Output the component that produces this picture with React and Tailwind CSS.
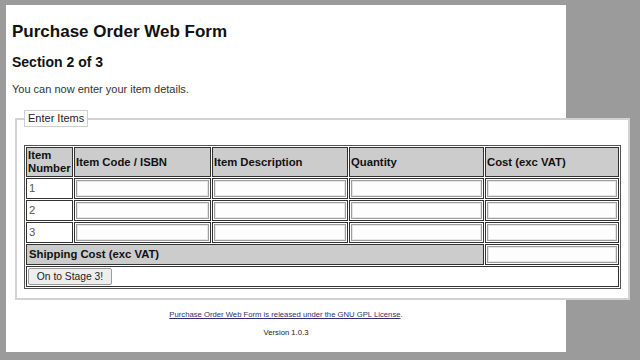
import React from "react";

const cellB = "border border-[#333333]";
const inputCls =
  "block w-full h-[17px] border border-[#9d9d9d] bg-[#fdfdfd] shadow-[inset_0_0_0_1px_#e6e6e6] outline-none";

function ItemRow({ n }) {
  return (
    <tr>
      <td className={`${cellB} px-[2px] text-[11.3px] leading-[13px] text-[#555]`}>{n}</td>
      {[0, 1, 2, 3].map((i) => (
        <td key={i} className={`${cellB} p-[1px]`}>
          <input type="text" className={inputCls} />
        </td>
      ))}
    </tr>
  );
}

export default function App() {
  return (
    <div className="min-h-screen w-full bg-[#9b9b9b] pt-[5px] pl-[6px] font-['Liberation_Sans',Arial,sans-serif] text-[#111]">
      <div className="w-[560px] h-[347px] bg-white pt-[17px]">
        <h1 className="ml-[6px] text-[17px] font-bold leading-[20px]">Purchase Order Web Form</h1>
        <h2 className="ml-[6px] mt-[12px] text-[14px] font-bold leading-[17px]">Section 2 of 3</h2>
        <p className="ml-[6px] mt-[12px] text-[11px] leading-[13px] text-[#333]">
          You can now enter your item details.
        </p>
        <fieldset className="mt-[14px] ml-[9px] w-[615px] bg-white border-2 border-[#d2d2d2] px-[7px] pt-[18px] pb-[9px]">
          <legend className="border border-[#cfcfcf] px-[3px] text-[11px] leading-[15px] text-[#222]">
            Enter Items
          </legend>
          <table className="w-full table-fixed border border-[#555555] border-separate border-spacing-[1px]">
            <colgroup>
              <col className="w-[47px]" />
              <col className="w-[137px]" />
              <col className="w-[136px]" />
              <col className="w-[135px]" />
              <col className="w-[134px]" />
            </colgroup>
            <thead>
              <tr>
                {["Item Number", "Item Code / ISBN", "Item Description", "Quantity", "Cost (exc VAT)"].map((h) => (
                  <th
                    key={h}
                    className={`${cellB} h-[30px] bg-[#cccccc] px-[1px] text-left align-middle text-[11.3px] font-bold leading-[13px]`}
                  >
                    {h}
                  </th>
                ))}
              </tr>
            </thead>
            <tbody>
              <ItemRow n="1" />
              <ItemRow n="2" />
              <ItemRow n="3" />
              <tr>
                <td colSpan={4} className={`${cellB} h-[21px] bg-[#cccccc] px-[2px] text-[11.3px] font-bold leading-[13px]`}>
                  Shipping Cost (exc VAT)
                </td>
                <td className={`${cellB} p-[1px]`}>
                  <input type="text" className={inputCls} />
                </td>
              </tr>
              <tr>
                <td colSpan={5} className={`${cellB} h-[21px] p-[1px]`}>
                  <button
                    type="button"
                    className="block h-[17px] w-[84px] rounded-[2px] border border-[#9a9a9a] bg-[#eeeeee] text-[10.3px] leading-[15px] text-[#222]"
                  >
                    On to Stage 3!
                  </button>
                </td>
              </tr>
            </tbody>
          </table>
        </fieldset>
        <div className="mt-[10px] text-center text-[7.7px] leading-[10px]">
          <a href="#" className="text-[#30306a] underline">
            Purchase Order Web Form is released under the GNU GPL License
          </a>
          .
        </div>
        <div className="mt-[8px] text-center text-[7.7px] leading-[10px] text-[#222]">Version 1.0.3</div>
      </div>
    </div>
  );
}
